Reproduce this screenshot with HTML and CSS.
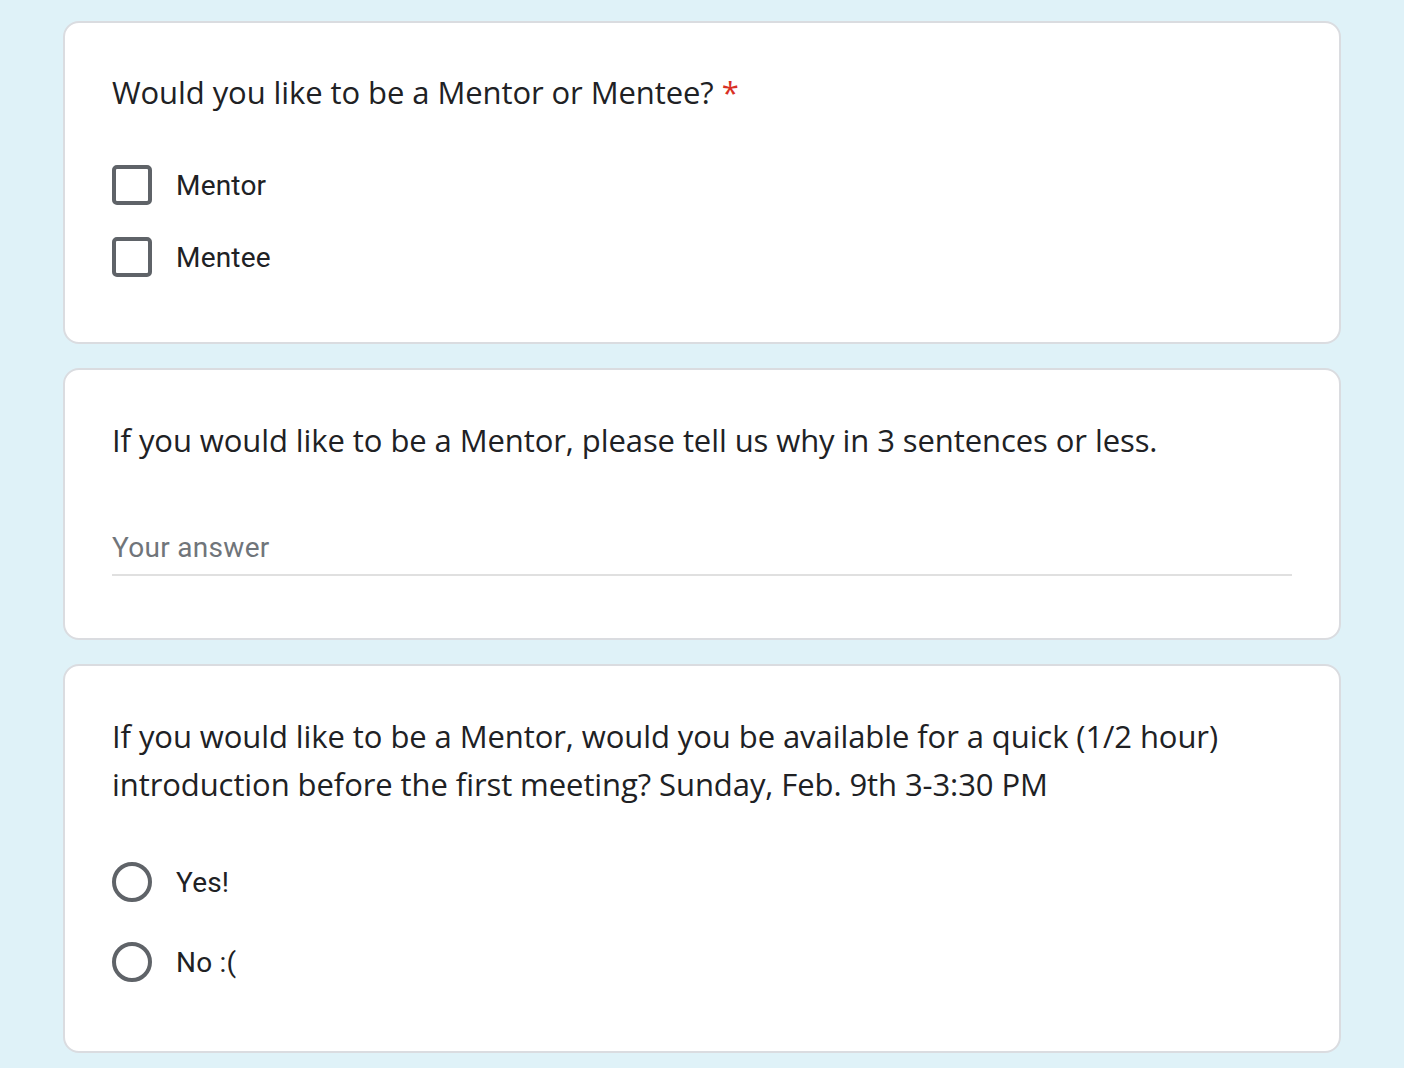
FILE: index.html
```html
<!DOCTYPE html>
<html>
<head>
<meta charset="utf-8">
<link rel="stylesheet" href="styles.css">
</head>
<body>
<main class="form">
  <section class="card">
    <div class="question">Would you like to be a Mentor or Mentee? <span class="req">*</span></div>
    <div class="options opts-check">
      <label class="option"><span class="box"></span><span class="label">Mentor</span></label>
      <label class="option"><span class="box"></span><span class="label">Mentee</span></label>
    </div>
  </section>
  <section class="card">
    <div class="question">If you would like to be a Mentor, please tell us why in 3 sentences or less.</div>
    <div class="answer"><span class="placeholder">Your answer</span></div>
  </section>
  <section class="card">
    <div class="question">If you would like to be a Mentor, would you be available for a quick (1/2 hour) introduction before the first meeting? Sunday, Feb. 9th 3-3:30 PM</div>
    <div class="options opts-radio">
      <label class="option"><span class="radio"></span><span class="label">Yes!</span></label>
      <label class="option"><span class="radio"></span><span class="label">No :(</span></label>
    </div>
  </section>
</main>
</body>
</html>
```

FILE: styles.css
```css
html, body {
  margin: 0;
  padding: 0;
  background: #dff2f8;
}
.form {
  width: 1278px;
  margin: 0 auto;
  padding-top: 21px;
  display: flex;
  flex-direction: column;
  gap: 24px;
}
.card {
  box-sizing: border-box;
  background: #fff;
  border: 2px solid #dadce0;
  border-radius: 16px;
  padding: 46px 47px 49px;
}
.card:first-child {
  padding-top: 45px;
}
.card:first-child .options {
  margin-top: 33px;
}
.question {
  font-family: "Open Sans", sans-serif;
  font-size: 31px;
  line-height: 48px;
  color: #202124;
  letter-spacing: -0.08px;
}
.req {
  color: #d93025;
}
.options {
  margin-top: 32px;
  display: flex;
  flex-direction: column;
}
.option {
  display: flex;
  align-items: center;
  gap: 24px;
}
.opts-check .option { height: 72px; }
.opts-radio { margin-top: 34px; }
.opts-radio .option { height: 80px; }
.box {
  box-sizing: border-box;
  width: 40px;
  height: 40px;
  border: 4px solid #5f6368;
  border-radius: 5px;
}
.radio {
  box-sizing: border-box;
  width: 40px;
  height: 40px;
  border: 4px solid #5f6368;
  border-radius: 50%;
}
.label {
  font-family: Roboto, sans-serif;
  font-size: 28px;
  color: #202124;
  letter-spacing: 0.2px;
}
.answer {
  margin-top: 64px;
  width: 1180px;
  height: 46px;
  border-bottom: 2px solid #e0e0e0;
  margin-bottom: 13px;
}
.placeholder {
  font-family: Roboto, sans-serif;
  font-size: 28px;
  line-height: 40px;
  color: #70757a;
  letter-spacing: 0.3px;
}
```
